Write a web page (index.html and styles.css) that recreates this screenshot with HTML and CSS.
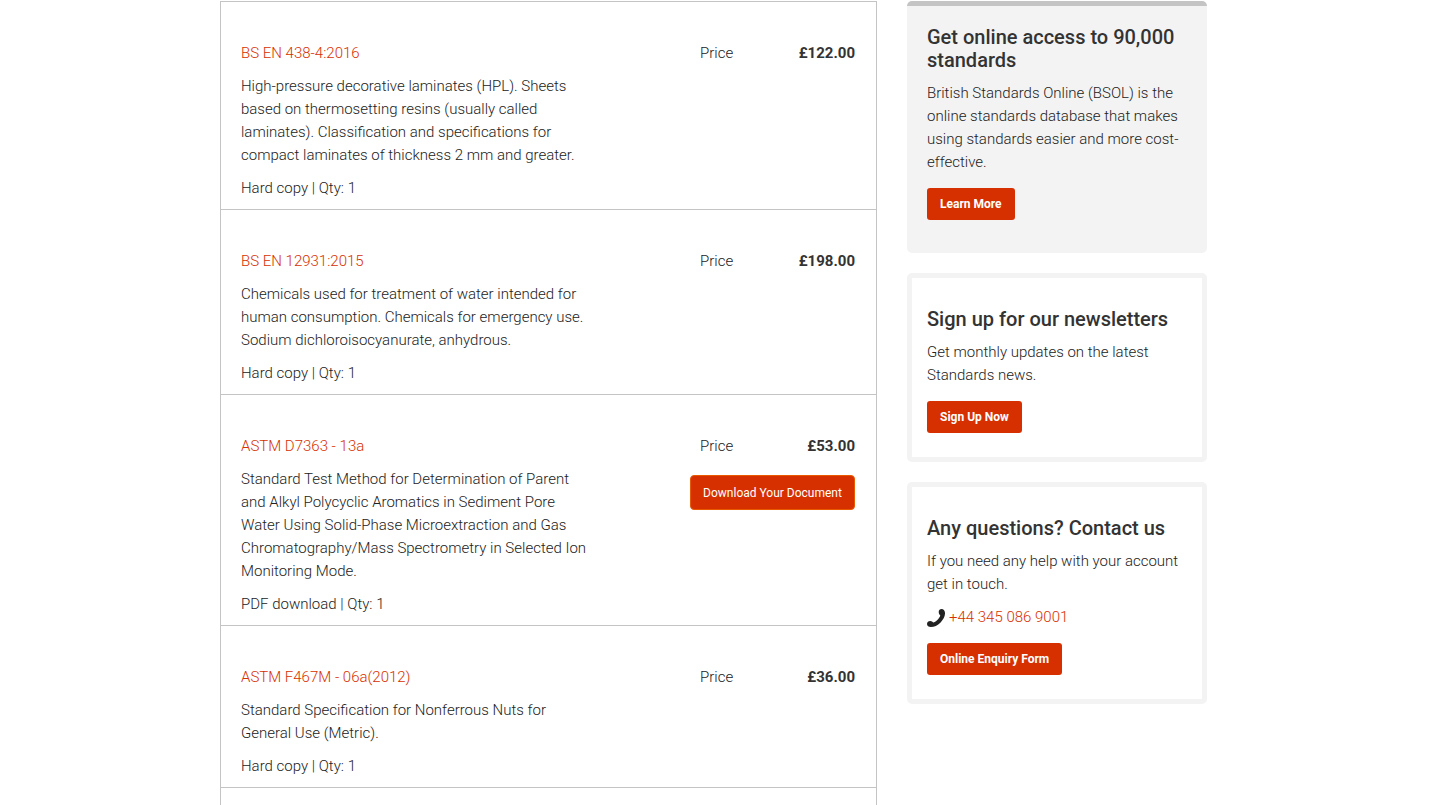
FILE: index.html
```html
<!DOCTYPE html>
<html lang="en">
<head>
<meta charset="utf-8">
<title>Order details</title>
<link rel="stylesheet" href="styles.css">
</head>
<body>
<div class="page">
  <main class="orders">
    <article class="order">
      <div class="order-info">
        <p><a href="#">BS EN 438-4:2016</a></p>
        <p>High-pressure decorative laminates (HPL). Sheets based on thermosetting resins (usually called laminates). Classification and specifications for compact laminates of thickness 2 mm and greater.</p>
        <p>Hard copy | Qty: 1</p>
      </div>
      <div class="order-side">
        <p class="price"><span>Price</span><strong>£122.00</strong></p>
      </div>
    </article>
    <article class="order">
      <div class="order-info">
        <p><a href="#">BS EN 12931:2015</a></p>
        <p>Chemicals used for treatment of water intended for human consumption. Chemicals for emergency use. Sodium dichloroisocyanurate, anhydrous.</p>
        <p>Hard copy | Qty: 1</p>
      </div>
      <div class="order-side">
        <p class="price"><span>Price</span><strong>£198.00</strong></p>
      </div>
    </article>
    <article class="order">
      <div class="order-info">
        <p><a href="#">ASTM D7363 - 13a</a></p>
        <p>Standard Test Method for Determination of Parent and Alkyl Polycyclic Aromatics in Sediment Pore Water Using Solid-Phase Microextraction and Gas Chromatography/Mass Spectrometry in Selected Ion Monitoring Mode.</p>
        <p>PDF download | Qty: 1</p>
      </div>
      <div class="order-side">
        <p class="price"><span>Price</span><strong>£53.00</strong></p>
        <button class="download" type="button">Download Your Document</button>
      </div>
    </article>
    <article class="order">
      <div class="order-info">
        <p><a href="#">ASTM F467M - 06a(2012)</a></p>
        <p>Standard Specification for Nonferrous Nuts for General Use (Metric).</p>
        <p>Hard copy | Qty: 1</p>
      </div>
      <div class="order-side">
        <p class="price"><span>Price</span><strong>£36.00</strong></p>
      </div>
    </article>
    <div class="order"></div>
  </main>
  <aside class="sidebar">
    <section class="card card-filled">
      <h2>Get online access to 90,000 standards</h2>
      <p>British Standards Online (BSOL) is the online standards database that makes using standards easier and more cost-effective.</p>
      <a class="button" href="#">Learn More</a>
    </section>
    <section class="card">
      <h2>Sign up for our newsletters</h2>
      <p>Get monthly updates on the latest Standards news.</p>
      <a class="button" href="#">Sign Up Now</a>
    </section>
    <section class="card">
      <h2>Any questions? Contact us</h2>
      <p>If you need any help with your account get in touch.</p>
      <p class="phone">
        <svg width="18" height="18" viewBox="0 0 18 18" aria-hidden="true"><path d="M14.6 0C16.4 0 17.8 1.6 18 3.8C18.2 7.2 16.4 10.6 13.6 13.4C10.6 16.4 7.2 18 3.9 18C1.6 18 0 16.8 0 15C0 13.2 1.4 12 3.2 12C4.8 12 5.6 13 6.2 13.6C8.6 13 12.4 9.4 13.3 6.4C12.4 5.7 11.7 4.6 11.7 3.1C11.7 1.3 12.9 0 14.6 0Z"/></svg>
        <a href="#">+44 345 086 9001</a>
      </p>
      <a class="button" href="#">Online Enquiry Form</a>
    </section>
  </aside>
</div>
</body>
</html>
```
FILE: styles.css
```css
* { box-sizing: border-box; }
body {
  margin: 0;
  background: #fff;
  color: #222;
  font: 300 15px/23px Roboto, "Noto Sans", sans-serif;
}
p, h2 { margin: 0; }
a { color: #d73000; text-decoration: none; }

.page {
  display: flex;
  align-items: flex-start;
  gap: 30px;
  max-width: 1000px;
  height: 100vh;
  margin: 0 auto;
  padding: 1px 13px 0 0;
  overflow: hidden;
}
.orders {
  flex: 1;
  border: 1px solid #c4c4c4;
  border-top: 0;
}
.order {
  display: flex;
  justify-content: space-between;
  min-height: 120px;
  padding: 40px 21px 9px 20px;
  border-top: 1px solid #c4c4c4;
}
.order-info {
  display: flex;
  flex-direction: column;
  flex: 0 1 350px;
  gap: 10px;
}
.order-side { width: 165px; }
.price {
  display: flex;
  justify-content: space-between;
  padding-left: 10px;
}
.price strong { font-weight: 700; color: #333; }
.download {
  width: 100%;
  height: 35px;
  margin-top: 17px;
  padding: 0;
  border: 1px solid #e95a00;
  border-radius: 4px;
  background: #d73000;
  color: #fff;
  font: 12px/18px Roboto, "Noto Sans", sans-serif;
}

.sidebar {
  display: flex;
  flex-direction: column;
  gap: 20px;
  width: 300px;
}
.card {
  padding: 30px 15px 24px;
  border: 5px solid #f3f3f3;
  border-radius: 5px;
}
.card-filled {
  padding: 20px 20px 33px;
  border-width: 5px 0 0;
  border-top-color: #c4c4c4;
  background: #f3f3f3;
}
.card h2 {
  margin-bottom: 10px;
  color: #333;
  font-size: 20px;
  font-weight: 500;
}
.card p { margin-bottom: 10px; }
.card .phone {
  display: flex;
  align-items: center;
  gap: 4px;
}
.phone svg { fill: #222; }
.button {
  display: inline-block;
  margin-top: 4px;
  padding: 7px 13px;
  border-radius: 3px;
  background: #d73000;
  color: #fff;
  font-size: 12px;
  font-weight: 700;
  line-height: 18px;
  vertical-align: top;
}
```
